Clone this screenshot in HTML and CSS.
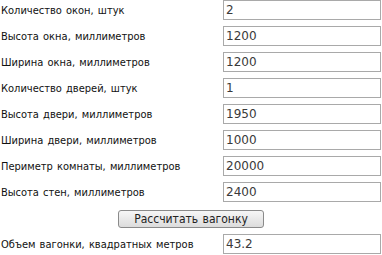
FILE: index.html
```html
<!DOCTYPE html>
<html lang="ru">
<head>
    <meta charset="UTF-8">
    <title>Калькулятор вагонки</title>
    <link rel="stylesheet" href="styles.css">
</head>
<body>
    <form class="calc">
        <div class="row">
            <label for="windows">Количество окон, штук</label>
            <input type="text" id="windows" value="2">
        </div>
        <div class="row">
            <label for="winHeight">Высота окна, миллиметров</label>
            <input type="text" id="winHeight" value="1200">
        </div>
        <div class="row">
            <label for="winWidth">Ширина окна, миллиметров</label>
            <input type="text" id="winWidth" value="1200">
        </div>
        <div class="row">
            <label for="doors">Количество дверей, штук</label>
            <input type="text" id="doors" value="1">
        </div>
        <div class="row">
            <label for="doorHeight">Высота двери, миллиметров</label>
            <input type="text" id="doorHeight" value="1950">
        </div>
        <div class="row">
            <label for="doorWidth">Ширина двери, миллиметров</label>
            <input type="text" id="doorWidth" value="1000">
        </div>
        <div class="row">
            <label for="perimeter">Периметр комнаты, миллиметров</label>
            <input type="text" id="perimeter" value="20000">
        </div>
        <div class="row">
            <label for="wallHeight">Высота стен, миллиметров</label>
            <input type="text" id="wallHeight" value="2400">
        </div>
        <div class="actions">
            <button type="button" class="calc-btn">Рассчитать вагонку</button>
        </div>
        <div class="row">
            <label for="result">Объем вагонки, квадратных метров</label>
            <input type="text" id="result" value="43.2">
        </div>
    </form>
</body>
</html>
```

FILE: styles.css
```css
body {
    margin: 0;
    background: #fff;
    font-family: "DejaVu Sans Condensed", "DejaVu Sans", Verdana, sans-serif;
    font-stretch: condensed;
    font-size: 11px;
    color: #111;
}
.calc {
    display: flex;
    flex-direction: column;
    gap: 6px;
    width: 382px;
}
.row {
    display: grid;
    grid-template-columns: 223px 158px;
    align-items: center;
    height: 20px;
}
.row label {
    padding-left: 1px;
    word-spacing: 1px;
}
.row input {
    box-sizing: border-box;
    width: 158px;
    height: 20px;
    margin: 0;
    padding: 0 2px;
    border: 1px solid #a9a9a9;
    font-family: "DejaVu Sans", Verdana, sans-serif;
    font-size: 12px;
    color: #3a3a3a;
}
.actions {
    display: flex;
    justify-content: center;
    padding-top: 2px;
}
.calc-btn {
    box-sizing: border-box;
    width: 146px;
    height: 18px;
    padding: 0;
    border: 1px solid #8a8a8a;
    border-radius: 3px;
    background: linear-gradient(#f6f6f6, #dcdcdc);
    font-family: "DejaVu Sans Condensed", "DejaVu Sans", Verdana, sans-serif;
    font-stretch: condensed;
    font-size: 12px;
    word-spacing: 1px;
    color: #222;
}
```
